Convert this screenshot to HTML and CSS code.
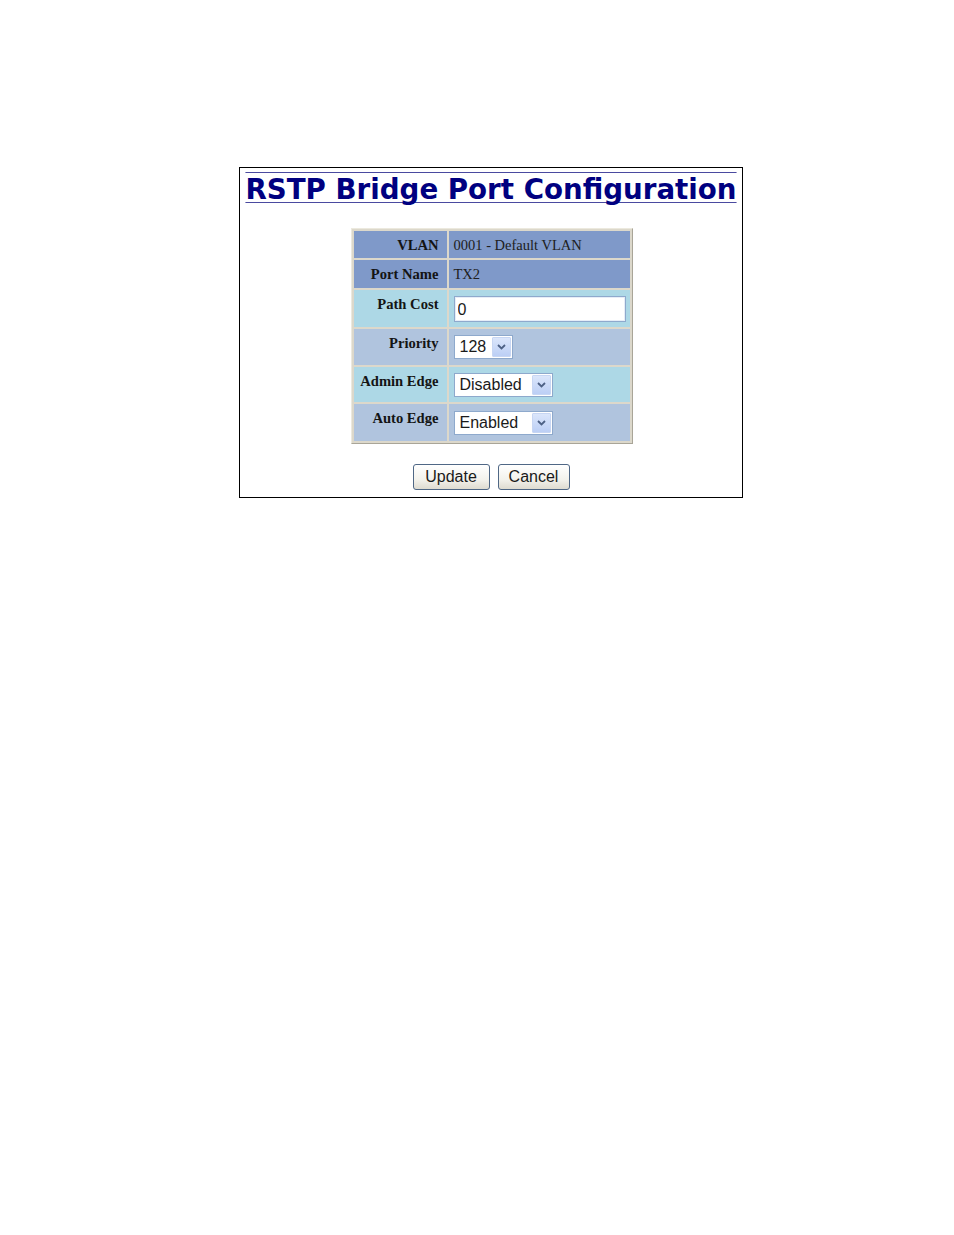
FILE: index.html
```html
<!DOCTYPE html>
<html>
<head>
<meta charset="utf-8">
<title>RSTP Bridge Port Configuration</title>
<link rel="stylesheet" href="styles.css">
</head>
<body>
<div class="page">
  <div class="box">
    <h1 class="title">RSTP Bridge Port Configuration</h1>
    <table class="cfg">
      <tr class="row-head r1">
        <th class="lbl">VLAN</th>
        <td class="val">0001 - Default VLAN</td>
      </tr>
      <tr class="row-head r2">
        <th class="lbl">Port Name</th>
        <td class="val">TX2</td>
      </tr>
      <tr class="row-light r3">
        <th class="lbl">Path Cost</th>
        <td class="val"><input class="txt" type="text" value="0"></td>
      </tr>
      <tr class="row-steel r4">
        <th class="lbl">Priority</th>
        <td class="val">
          <span class="sel sel-small"><span class="sel-text">128</span><span class="sel-btn"><svg width="9" height="6" viewBox="0 0 9 6"><path d="M1 1 L4.5 4.5 L8 1" fill="none" stroke="#4d6185" stroke-width="1.8"/></svg></span></span>
        </td>
      </tr>
      <tr class="row-light r5">
        <th class="lbl">Admin Edge</th>
        <td class="val">
          <span class="sel sel-wide"><span class="sel-text">Disabled</span><span class="sel-btn"><svg width="9" height="6" viewBox="0 0 9 6"><path d="M1 1 L4.5 4.5 L8 1" fill="none" stroke="#4d6185" stroke-width="1.8"/></svg></span></span>
        </td>
      </tr>
      <tr class="row-steel r6">
        <th class="lbl">Auto Edge</th>
        <td class="val">
          <span class="sel sel-wide"><span class="sel-text">Enabled</span><span class="sel-btn"><svg width="9" height="6" viewBox="0 0 9 6"><path d="M1 1 L4.5 4.5 L8 1" fill="none" stroke="#4d6185" stroke-width="1.8"/></svg></span></span>
        </td>
      </tr>
    </table>
    <div class="actions">
      <button class="btn btn-update" type="button">Update</button>
      <button class="btn btn-cancel" type="button">Cancel</button>
    </div>
  </div>
</div>
</body>
</html>
```
FILE: styles.css
```css
html, body {
  margin: 0;
  padding: 0;
  background: #ffffff;
}

.page {
  padding-top: 167px;
  padding-left: 239px;
}

.box {
  width: 502px;
  border: 1px solid #000000;
  padding: 0 0 7px 0;
  display: flex;
  flex-direction: column;
  align-items: center;
}

.title {
  margin: 6px 0 0 0;
  font-family: "DejaVu Sans", Verdana, sans-serif;
  font-weight: bold;
  font-size: 27.7px;
  line-height: 32px;
  color: #000080;
  text-decoration: underline overline;
  text-decoration-color: #4a4aa0;
  text-decoration-thickness: 1px;
  text-underline-offset: 3px;
  text-decoration-skip-ink: none;
  white-space: nowrap;
}

.cfg {
  margin-top: 22px;
  margin-left: 1px;
  border-collapse: separate;
  border-spacing: 2px;
  border-style: solid;
  border-width: 1px;
  border-color: #ece9de #a9a598 #a9a598 #ece9de;
  background: #dcd8cb;
  width: 282px;
}

.cfg th, .cfg td {
  padding: 0;
  font-family: "Liberation Serif", "Times New Roman", serif;
  line-height: 16px;
}

.lbl {
  width: 85px;
  text-align: right;
  vertical-align: top;
  padding: 6px 8px 0 0 !important;
  font-weight: bold;
  font-size: 14.6px;
  color: #141414;
  white-space: nowrap;
}

.val {
  vertical-align: middle;
  padding-left: 5px !important;
  font-size: 14.5px;
  color: #202020;
  white-space: nowrap;
}

.row-head th, .row-head td { background: #7f99c9; }
.row-light th, .row-light td { background: #add8e6; }
.row-steel th, .row-steel td { background: #b0c4de; }

.r1 { height: 27px; }
.r2 { height: 28px; }
.r3 { height: 37px; }
.r4 { height: 36px; }
.r5 { height: 35px; }
.r6 { height: 37px; }

.txt {
  box-sizing: border-box;
  width: 172px;
  height: 26px;
  margin: 0;
  padding: 2px 4px 0 3px;
  border: 1px solid #8ea9cc;
  box-shadow: inset 0 0 0 1px #e6edf7;
  background: #ffffff;
  font-family: "Liberation Sans", Arial, sans-serif;
  font-size: 16px;
  color: #1a1a1a;
  outline: none;
  vertical-align: middle;
}

.sel {
  box-sizing: border-box;
  display: inline-flex;
  align-items: center;
  justify-content: space-between;
  height: 24px;
  border: 1px solid #8ea9cc;
  background: #ffffff;
  padding: 1px 1px 1px 5px;
  vertical-align: middle;
  font-family: "Liberation Sans", Arial, sans-serif;
  font-size: 16px;
  color: #1a1a1a;
}

.sel-small { width: 59px; }
.sel-wide { width: 99px; }

.sel-text {
  line-height: 20px;
}

.sel-btn {
  box-sizing: border-box;
  width: 19px;
  height: 20px;
  display: flex;
  align-items: center;
  justify-content: center;
  background: linear-gradient(#dbe6fb, #bccff5);
  border: 1px solid #c7d6f3;
  border-radius: 1px;
}

.actions {
  margin-top: 20px;
  display: flex;
  gap: 8px;
}

.btn {
  box-sizing: border-box;
  height: 26px;
  padding: 0;
  margin: 0;
  border: 1px solid #4f6785;
  border-radius: 3px;
  background: linear-gradient(#ffffff, #f3f2ec 60%, #dedbd0);
  font-family: "Liberation Sans", Arial, sans-serif;
  font-size: 16px;
  color: #1a1a1a;
}

.btn-update { width: 77px; }
.btn-cancel { width: 72px; }
```
